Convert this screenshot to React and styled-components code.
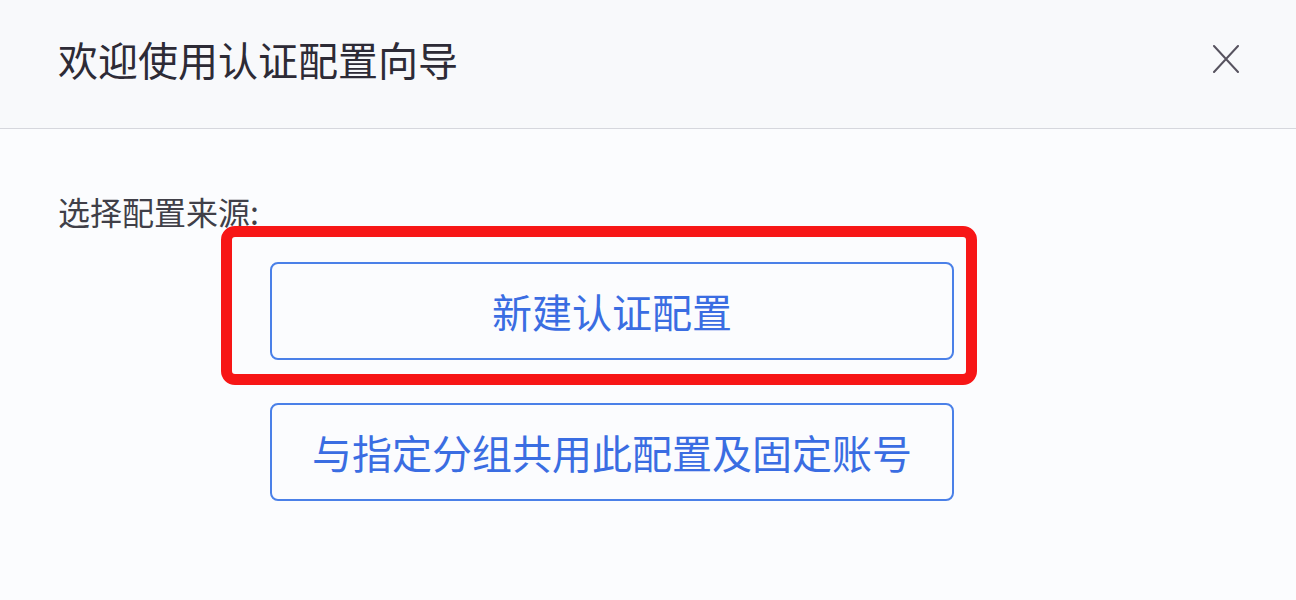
import styled, { createGlobalStyle } from "styled-components";

const GlobalStyle = createGlobalStyle`
  html, body {
    margin: 0;
    padding: 0;
    background: #fbfcfe;
    font-family: "Noto Sans CJK SC", "Noto Sans", sans-serif;
  }
`;

const Dialog = styled.div`
  width: 1296px;
  height: 600px;
  box-sizing: border-box;
  background: #fbfcfe;
  display: flex;
  flex-direction: column;
  overflow: hidden;
`;

const Header = styled.div`
  height: 129px;
  box-sizing: border-box;
  display: flex;
  align-items: center;
  justify-content: space-between;
  padding: 0 56px 10px 58px;
  background: #f8f9fb;
  border-bottom: 1px solid #d6d7dd;
`;

const Title = styled.h1`
  margin: 0;
  font-size: 40px;
  font-weight: 400;
  line-height: 1.2;
  color: #2d2b36;
`;

const CloseButton = styled.button`
  border: 0;
  background: none;
  padding: 0;
  width: 28px;
  height: 28px;
  display: flex;
  cursor: pointer;
`;

const Body = styled.div`
  padding: 62px 0 0 58px;
  display: flex;
  flex-direction: column;
`;

const Label = styled.div`
  font-size: 32px;
  line-height: 40px;
  color: #403f48;
`;

const Options = styled.div`
  margin: 31px 0 0 212px;
  width: 684px;
  display: flex;
  flex-direction: column;
  gap: 43px;
`;

const OptionSlot = styled.div`
  position: relative;
`;

const Highlight = styled.div`
  position: absolute;
  top: -36px;
  left: -49px;
  right: -23px;
  bottom: -25px;
  border: 11px solid #f71616;
  border-radius: 14px;
  pointer-events: none;
`;

const OptionButton = styled.button`
  width: 100%;
  height: 98px;
  box-sizing: border-box;
  border: 2px solid #4a80e8;
  border-radius: 8px;
  background: #fbfcfe;
  color: #3a6de2;
  font-family: "Noto Sans CJK SC", "Noto Sans", sans-serif;
  font-size: 40px;
  font-weight: 400;
  cursor: pointer;
  padding: 0;
`;

const CloseIcon = () => (
  <svg width="28" height="28" viewBox="0 0 28 28" fill="none">
    <path d="M2 1 L26 27 M26 1 L2 27" stroke="#57535f" strokeWidth="2" strokeLinecap="round" />
  </svg>
);

export default function App() {
  return (
    <>
      <GlobalStyle />
      <Dialog>
        <Header>
          <Title>欢迎使用认证配置向导</Title>
          <CloseButton aria-label="关闭">
            <CloseIcon />
          </CloseButton>
        </Header>
        <Body>
          <Label>选择配置来源:</Label>
          <Options>
            <OptionSlot>
              <OptionButton>新建认证配置</OptionButton>
              <Highlight />
            </OptionSlot>
            <OptionSlot>
              <OptionButton>与指定分组共用此配置及固定账号</OptionButton>
            </OptionSlot>
          </Options>
        </Body>
      </Dialog>
    </>
  );
}
